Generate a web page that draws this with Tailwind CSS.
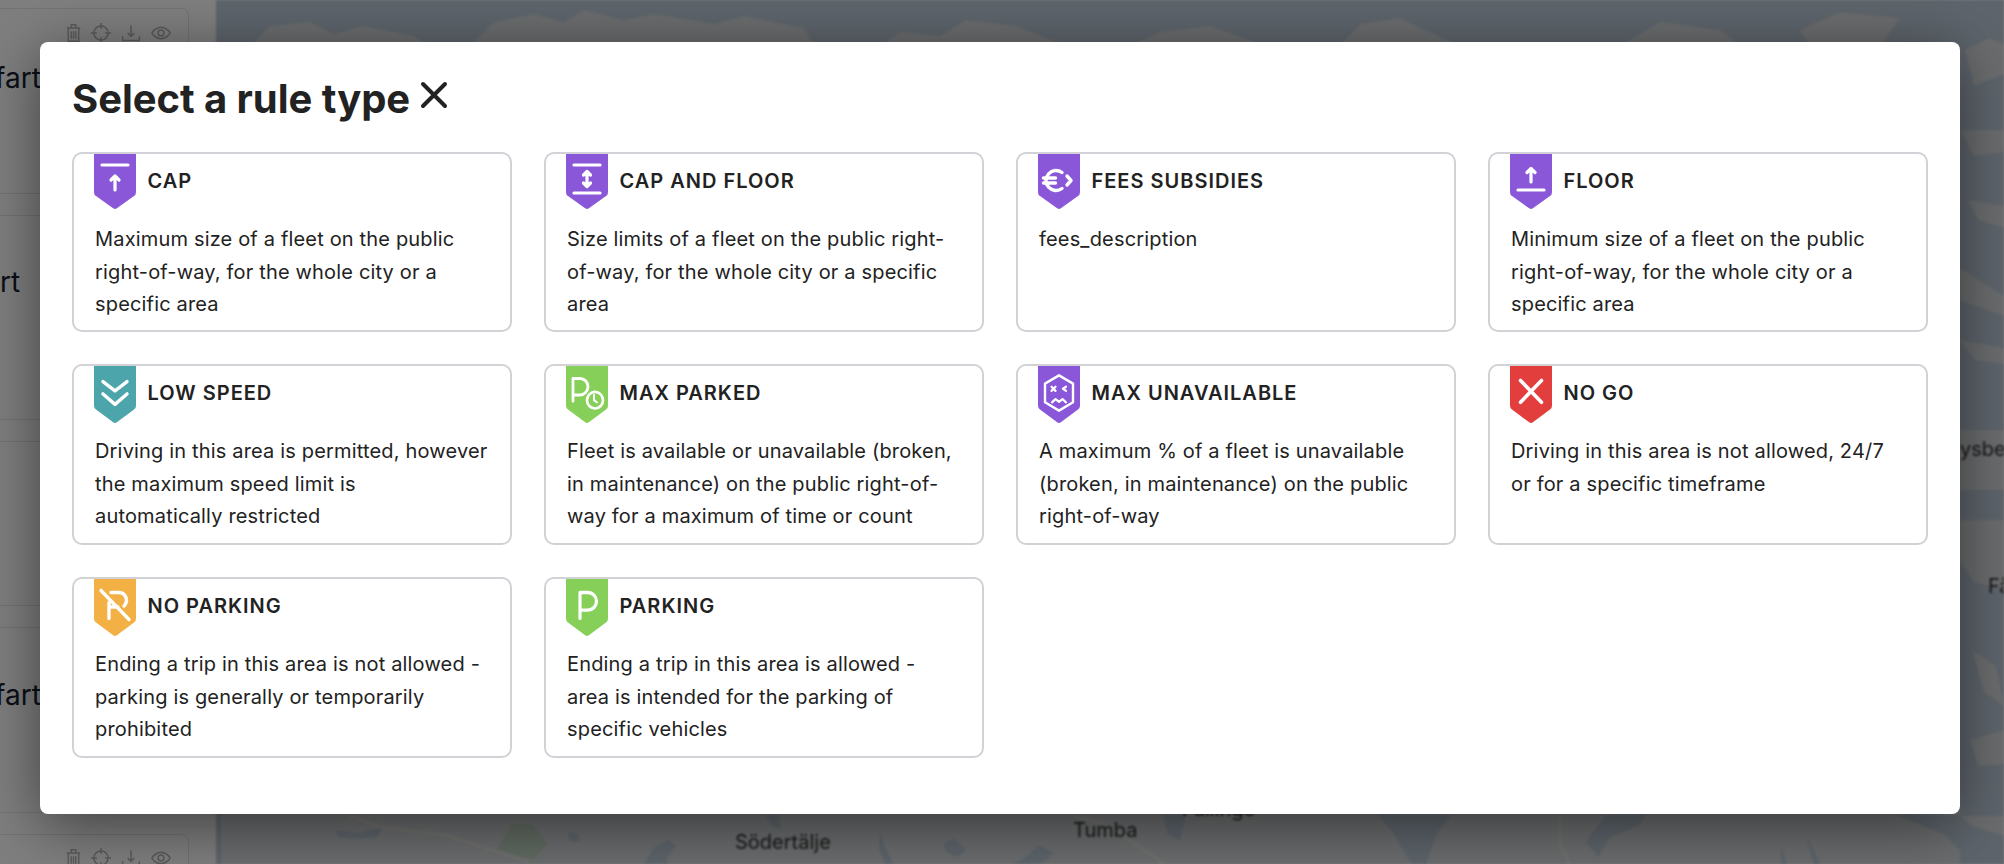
<!DOCTYPE html>
<html lang="en">
<head>
    <meta charset="UTF-8">
    <meta name="viewport" content="width=device-width, initial-scale=1.0">
    <title>Select a rule type</title>
    <script src="https://cdn.jsdelivr.net/npm/@tailwindcss/browser@4"></script>
</head>
<body class="relative h-[864px] w-[2004px] overflow-hidden bg-white font-['Inter',sans-serif] text-[#222]">

    <!-- Page behind the dialog -->
    <div class="flex h-full">
        <aside class="flex w-[216px] shrink-0 flex-col gap-[21px] overflow-hidden bg-white pr-[27px] text-[#14202e]">
            <div class="mt-[8px] h-[186px] shrink-0 rounded-r-lg border border-l-0 border-gray-200 pt-[14px]">
                <div class="flex justify-end gap-[10px] pr-[17px] text-[#b4b4b8]">
                    <svg class="h-5 w-[15px]" viewBox="0 0 20 24" fill="none" stroke="currentColor" stroke-width="1.8" preserveAspectRatio="none"><path d="M1 6h18M7 6V2h6v4M3 6v16h14V6M7 10v9M10 10v9M13 10v9"/></svg>
                    <svg class="h-5 w-5" viewBox="0 0 24 24" fill="none" stroke="currentColor" stroke-width="1.8"><circle cx="12" cy="12" r="8.5"/><path d="M12 0v7M12 17v7M0 12h7M17 12h7"/></svg>
                    <svg class="h-5 w-5" viewBox="0 0 24 24" fill="none" stroke="currentColor" stroke-width="1.8"><path d="M12 3v13M8 12l4 4 4-4M2 16v5h20v-5"/></svg>
                    <svg class="h-5 w-5" viewBox="0 0 24 24" fill="none" stroke="currentColor" stroke-width="1.8"><path d="M1 12s4-7 11-7 11 7 11 7-4 7-11 7-11-7-11-7z"/><circle cx="12" cy="12" r="3.5"/></svg>
                </div>
                <p class="ml-[-5px] mt-[14px] whitespace-nowrap text-[28px]">fart</p>
            </div>
            <div class="h-[205px] shrink-0 rounded-r-lg border border-l-0 border-gray-200 pt-[45px]">
                <p class="whitespace-nowrap text-[28px]">rt</p>
            </div>
            <div class="h-[165px] shrink-0 rounded-r-lg border border-l-0 border-gray-200"></div>
            <div class="h-[186px] shrink-0 rounded-r-lg border border-l-0 border-gray-200 pt-[46px]">
                <p class="ml-[-5px] whitespace-nowrap text-[28px]">fart</p>
            </div>
            <div class="flex h-[60px] shrink-0 justify-end gap-[10px] rounded-r-lg border border-l-0 border-gray-200 pr-[17px] pt-[13px] text-[#b4b4b8]">
                <svg class="h-5 w-[15px]" viewBox="0 0 20 24" fill="none" stroke="currentColor" stroke-width="1.8" preserveAspectRatio="none"><path d="M1 6h18M7 6V2h6v4M3 6v16h14V6M7 10v9M10 10v9M13 10v9"/></svg>
                <svg class="h-5 w-5" viewBox="0 0 24 24" fill="none" stroke="currentColor" stroke-width="1.8"><circle cx="12" cy="12" r="8.5"/><path d="M12 0v7M12 17v7M0 12h7M17 12h7"/></svg>
                <svg class="h-5 w-5" viewBox="0 0 24 24" fill="none" stroke="currentColor" stroke-width="1.8"><path d="M12 3v13M8 12l4 4 4-4M2 16v5h20v-5"/></svg>
                <svg class="h-5 w-5" viewBox="0 0 24 24" fill="none" stroke="currentColor" stroke-width="1.8"><path d="M1 12s4-7 11-7 11 7 11 7-4 7-11 7-11-7-11-7z"/><circle cx="12" cy="12" r="3.5"/></svg>
            </div>
        </aside>

        <!-- Map: viewBox uses page coordinates -->
        <svg class="h-[864px] w-[1788px] shrink-0 blur-[1px]" viewBox="216 0 1788 864">
            <rect x="216" y="0" width="1788" height="864" fill="#d6dbdd"/>
            <g fill="#bccad9">
                <!-- top strip -->
                <path d="M216 0h1788v46H216z"/>
                <!-- right strip -->
                <path d="M1960 0h44v864h-44z"/>
                <!-- bottom strip -->
                <path d="M335 830l24 3 24-6-6 10-22 2-16-2zM568 832l10 2 2 8-10 0zM644 864l10-16 14-8 8 6-10 12 2 6zM765 815h14l2 15-8-4zM880 833l5 14 8 17h-8l-6-15zM944 844l10-6 12 12-8 7-12-5zM216 790h5v74h-5zM1013 864l12-6 14-13 15 8-10 9-6 2zM1163 815h23l-6 25-12-5zM1378 815h73l-15 20-10 29h-14l-18-30zM1586 842l20-27h40l-6 10-30 12-12 20zM1781 845l6 19h-6zM1806 835l6 12 8 17h-6zM1896 815h108v49h-30l-30-30z"/>
            </g>
            <g fill="#d6dbdd">
                <path d="M250 46l20-20 40-4 24 12 30-8 50 10 16 10zM470 46l24-24 40-8 30 8 20-12 40 10 30-6 60 10 30-8 60 12 10 18zM880 46l20-14 40 4 26-16 50 6 30 12 20 8zM1130 46l30-14 50-6 34 12 20 8zM1340 46l20-22 40-6 30 14 30 14zM1620 46l40-24 60 8 20 16zM1800 30l40-18 60 6-20 28h-70z"/>
                <path d="M1965 50l24-12 15 6v30l-30 12zM1960 130h44v22l-30 4zM1968 200l36 6v22l-26-8zM1960 268l44 28v20l-34-12-10-4zM1960 340l44 8v16l-30-4zM1960 430h44v60h-44zM1960 520h44v70l-30-8-14-20zM1972 650l24 16 8 40-20-14zM1970 740l34-10v34l-26 2zM1960 816h44v20l-32-10z"/>
            </g>
            <path d="M497 850l15-27 20 2 16 18-14 16-20-4z" fill="#c2d6c4"/>
            <g fill="none" stroke="#e8e5de" stroke-width="2.500">
                <path d="M348 815l35 13 63 7 83 27M1165 864l-60-40-30-8M1560 815v30l10 19"/>
            </g>
            <g fill="#2e2e2e" font-size="20">
                <text x="735" y="849">Södertälje</text>
                <text x="1073" y="837">Tumba</text>
                <text x="1182" y="816">Fullinge</text>
                <text x="1960" y="456">ysberg</text>
                <text x="1988" y="593">Få</text>
            </g>
        </svg>
    </div>

    <!-- Backdrop -->
    <div class="absolute inset-0 bg-black/50"></div>

    <!-- Dialog -->
    <div class="absolute left-[40px] top-[42px] h-[772px] w-[1920px] rounded-lg bg-white px-8 pt-[32px] shadow-[0_12px_60px_rgba(0,0,0,0.5)]">
        <div class="flex h-[78px] items-start gap-[10px]">
            <h1 class="text-[40px] font-bold leading-[50px] tracking-[-0.05px]">Select a rule type</h1>
            <button class="mt-[7px]">
                <svg class="h-[28px] w-[28px]" viewBox="0 0 28 28" fill="none" stroke="#222" stroke-width="4" stroke-linecap="round"><path d="M3 3l22 22M25 3L3 25"/></svg>
            </button>
        </div>

        <div class="grid grid-cols-4 gap-x-8 gap-y-8">
            <!-- CAP -->
            <div class="h-[180px] rounded-[10px] border-2 border-[#d1d1d6] px-[21px]">
                <div class="ml-[-1px] flex gap-[11.5px]">
                    <svg class="h-[55px] w-[42px] shrink-0" viewBox="0 0 42 55" preserveAspectRatio="none"><path fill="#8b57d9" d="M0 0h42v38q0 3-2 4L22.500 54.600q-1.500 .8-3 0L2 42q-2-1-2-4z"/><path fill="none" stroke="#fff" stroke-width="3.200" stroke-linecap="round" stroke-linejoin="round" d="M8 11h26M21 36V23M17 26l4-4 4 4"/></svg>
                    <h3 class="pt-[13px] text-[20px] font-semibold leading-[28px] tracking-[0.05em]">CAP</h3>
                </div>
                <p class="pt-[14px] text-[20px] leading-[32.6px] tracking-[0.17px]">Maximum size of a fleet on the public right-of-way, for the whole city or a specific area</p>
            </div>
            <!-- CAP AND FLOOR -->
            <div class="h-[180px] rounded-[10px] border-2 border-[#d1d1d6] px-[21px]">
                <div class="ml-[-1px] flex gap-[11.5px]">
                    <svg class="h-[55px] w-[42px] shrink-0" viewBox="0 0 42 55" preserveAspectRatio="none"><path fill="#8b57d9" d="M0 0h42v38q0 3-2 4L22.500 54.600q-1.500 .8-3 0L2 42q-2-1-2-4z"/><path fill="none" stroke="#fff" stroke-width="3.200" stroke-linecap="round" stroke-linejoin="round" d="M8 11h26M8 39h26M21 18v14M17.500 21l3.500-3.500 3.500 3.500M17.500 29l3.500 3.500 3.500-3.500"/></svg>
                    <h3 class="pt-[13px] text-[20px] font-semibold leading-[28px] tracking-[0.05em]">CAP AND FLOOR</h3>
                </div>
                <p class="pt-[14px] text-[20px] leading-[32.6px] tracking-[0.17px]">Size limits of a fleet on the public right-of-way, for the whole city or a specific area</p>
            </div>
            <!-- FEES SUBSIDIES -->
            <div class="h-[180px] rounded-[10px] border-2 border-[#d1d1d6] px-[21px]">
                <div class="ml-[-1px] flex gap-[11.5px]">
                    <svg class="h-[55px] w-[42px] shrink-0" viewBox="0 0 42 55" preserveAspectRatio="none"><path fill="#8b57d9" d="M0 0h42v38q0 3-2 4L22.500 54.600q-1.500 .8-3 0L2 42q-2-1-2-4z"/><path fill="none" stroke="#fff" stroke-width="3.400" stroke-linecap="round" stroke-linejoin="round" d="M24 18.500a10 10 0 1 0 0 16M5.500 24h12M5.500 29h12M29 22l4 4.500-4 4.500"/></svg>
                    <h3 class="pt-[13px] text-[20px] font-semibold leading-[28px] tracking-[0.05em]">FEES SUBSIDIES</h3>
                </div>
                <p class="pt-[14px] text-[20px] leading-[32.6px] tracking-[0.17px]">fees_description</p>
            </div>
            <!-- FLOOR -->
            <div class="h-[180px] rounded-[10px] border-2 border-[#d1d1d6] px-[21px]">
                <div class="ml-[-1px] flex gap-[11.5px]">
                    <svg class="h-[55px] w-[42px] shrink-0" viewBox="0 0 42 55" preserveAspectRatio="none"><path fill="#8b57d9" d="M0 0h42v38q0 3-2 4L22.500 54.600q-1.500 .8-3 0L2 42q-2-1-2-4z"/><path fill="none" stroke="#fff" stroke-width="3.200" stroke-linecap="round" stroke-linejoin="round" d="M8 36h26M21 28V15M17 18.500l4-4 4 4"/></svg>
                    <h3 class="pt-[13px] text-[20px] font-semibold leading-[28px] tracking-[0.05em]">FLOOR</h3>
                </div>
                <p class="pt-[14px] text-[20px] leading-[32.6px] tracking-[0.17px]">Minimum size of a fleet on the public right-of-way, for the whole city or a specific area</p>
            </div>
            <!-- LOW SPEED -->
            <div class="h-[181px] rounded-[10px] border-2 border-[#d1d1d6] px-[21px]">
                <div class="ml-[-1px] flex gap-[11.5px]">
                    <svg class="h-[57px] w-[42px] shrink-0" viewBox="0 0 42 55" preserveAspectRatio="none"><path fill="#4ba5ab" d="M0 0h42v38q0 3-2 4L22.500 54.600q-1.500 .8-3 0L2 42q-2-1-2-4z"/><path fill="none" stroke="#fff" stroke-width="3.400" stroke-linecap="round" stroke-linejoin="round" d="M9 15l12 9 12-9M9 27l12 10 12-10"/></svg>
                    <h3 class="pt-[13px] text-[20px] font-semibold leading-[28px] tracking-[0.05em]">LOW SPEED</h3>
                </div>
                <p class="pt-[12px] text-[20px] leading-[32.6px] tracking-[0.17px]">Driving in this area is permitted, however the maximum speed limit is automatically restricted</p>
            </div>
            <!-- MAX PARKED -->
            <div class="h-[181px] rounded-[10px] border-2 border-[#d1d1d6] px-[21px]">
                <div class="ml-[-1px] flex gap-[11.5px]">
                    <svg class="h-[57px] w-[42px] shrink-0" viewBox="0 0 42 55" preserveAspectRatio="none"><path fill="#86d05a" d="M0 0h42v38q0 3-2 4L22.500 54.600q-1.500 .8-3 0L2 42q-2-1-2-4z"/><path fill="none" stroke="#fff" stroke-width="2.800" stroke-linecap="round" stroke-linejoin="round" d="M7 34V12h7a8 8 0 0 1 0 16H7"/><circle cx="29" cy="33" r="8" fill="none" stroke="#fff" stroke-width="2.600"/><path fill="none" stroke="#fff" stroke-width="2" stroke-linecap="round" d="M28 28v5l3 2"/></svg>
                    <h3 class="pt-[13px] text-[20px] font-semibold leading-[28px] tracking-[0.05em]">MAX PARKED</h3>
                </div>
                <p class="pt-[12px] text-[20px] leading-[32.6px] tracking-[0.17px]">Fleet is available or unavailable (broken, in maintenance) on the public right-of-way for a maximum of time or count</p>
            </div>
            <!-- MAX UNAVAILABLE -->
            <div class="h-[181px] rounded-[10px] border-2 border-[#d1d1d6] px-[21px]">
                <div class="ml-[-1px] flex gap-[11.5px]">
                    <svg class="h-[57px] w-[42px] shrink-0" viewBox="0 0 42 55" preserveAspectRatio="none"><path fill="#8b57d9" d="M0 0h42v38q0 3-2 4L22.500 54.600q-1.500 .8-3 0L2 42q-2-1-2-4z"/><path fill="none" stroke="#fff" stroke-width="2.400" stroke-linejoin="round" d="M21 9l14 8v18l-14 8-14-8V17z"/><path fill="none" stroke="#fff" stroke-width="2.200" stroke-linecap="round" stroke-linejoin="round" d="M13.500 20l4 4M17.500 20l-4 4M28 20l-3 2 3 2M14 35l3.500-3 3.500 2.500 3.500-2.500 3.500 3"/></svg>
                    <h3 class="pt-[13px] text-[20px] font-semibold leading-[28px] tracking-[0.05em]">MAX UNAVAILABLE</h3>
                </div>
                <p class="pt-[12px] text-[20px] leading-[32.6px] tracking-[0.17px]">A maximum % of a fleet is unavailable (broken, in maintenance) on the public right-of-way</p>
            </div>
            <!-- NO GO -->
            <div class="h-[181px] rounded-[10px] border-2 border-[#d1d1d6] px-[21px]">
                <div class="ml-[-1px] flex gap-[11.5px]">
                    <svg class="h-[57px] w-[42px] shrink-0" viewBox="0 0 42 55" preserveAspectRatio="none"><path fill="#e33e3e" d="M0 0h42v38q0 3-2 4L22.500 54.600q-1.500 .8-3 0L2 42q-2-1-2-4z"/><path fill="none" stroke="#fff" stroke-width="3.600" stroke-linecap="round" d="M10.500 14l21 21M31.500 14l-21 21"/></svg>
                    <h3 class="pt-[13px] text-[20px] font-semibold leading-[28px] tracking-[0.05em]">NO GO</h3>
                </div>
                <p class="pt-[12px] text-[20px] leading-[32.6px] tracking-[0.17px]">Driving in this area is not allowed, 24/7 or for a specific timeframe</p>
            </div>
            <!-- NO PARKING -->
            <div class="h-[181px] rounded-[10px] border-2 border-[#d1d1d6] px-[21px]">
                <div class="ml-[-1px] flex gap-[11.5px]">
                    <svg class="h-[57px] w-[42px] shrink-0" viewBox="0 0 42 55" preserveAspectRatio="none"><path fill="#f2b045" d="M0 0h42v38q0 3-2 4L22.500 54.600q-1.500 .8-3 0L2 42q-2-1-2-4z"/><path fill="none" stroke="#fff" stroke-width="3.400" stroke-linecap="round" stroke-linejoin="round" d="M7 11l28 28M17 13h8a7.500 7.500 0 0 1 5 13M15 23v15M15 27h9"/></svg>
                    <h3 class="pt-[13px] text-[20px] font-semibold leading-[28px] tracking-[0.05em]">NO PARKING</h3>
                </div>
                <p class="pt-[12px] text-[20px] leading-[32.6px] tracking-[0.17px]">Ending a trip in this area is not allowed - parking is generally or temporarily prohibited</p>
            </div>
            <!-- PARKING -->
            <div class="h-[181px] rounded-[10px] border-2 border-[#d1d1d6] px-[21px]">
                <div class="ml-[-1px] flex gap-[11.5px]">
                    <svg class="h-[57px] w-[42px] shrink-0" viewBox="0 0 42 55" preserveAspectRatio="none"><path fill="#86d05a" d="M0 0h42v38q0 3-2 4L22.500 54.600q-1.500 .8-3 0L2 42q-2-1-2-4z"/><path fill="none" stroke="#fff" stroke-width="3.200" stroke-linecap="round" stroke-linejoin="round" d="M14 38V13h8a8.500 8.500 0 0 1 0 17h-8"/></svg>
                    <h3 class="pt-[13px] text-[20px] font-semibold leading-[28px] tracking-[0.05em]">PARKING</h3>
                </div>
                <p class="pt-[12px] text-[20px] leading-[32.6px] tracking-[0.17px]">Ending a trip in this area is allowed - area is intended for the parking of specific vehicles</p>
            </div>
        </div>
    </div>

</body>
</html>
